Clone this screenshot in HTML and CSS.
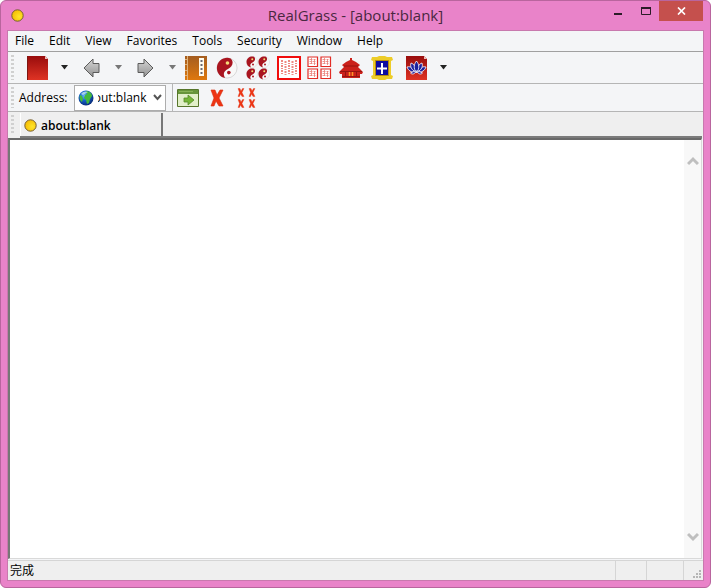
FILE: index.html
```html
<!DOCTYPE html>
<html lang="en">
<head>
  <meta charset="UTF-8">
  <title>RealGrass - [about:blank]</title>
  <link rel="stylesheet" href="styles.css">
</head>
<body>

  <!-- Shared shapes -->
  <svg class="defs" width="0" height="0" aria-hidden="true">
    <defs>
      <linearGradient id="red" x1="0" y1="0" x2="0" y2="1"><stop offset="0" stop-color="#980c0c"/><stop offset="1" stop-color="#df3324"/></linearGradient>
      <linearGradient id="gray" x1="0" y1="0" x2="0" y2="1"><stop offset="0" stop-color="#d5d5d5"/><stop offset="1" stop-color="#929292"/></linearGradient>
      <linearGradient id="wood" x1="0" y1="0" x2="0" y2="1"><stop offset="0" stop-color="#a45d20"/><stop offset="1" stop-color="#df780d"/></linearGradient>
      <radialGradient id="gold" cx=".65" cy=".6" r=".7"><stop offset="0" stop-color="#ffe52a"/><stop offset="1" stop-color="#f5b900"/></radialGradient>
      <radialGradient id="sea" cx=".4" cy=".35" r=".7"><stop offset="0" stop-color="#69b9f5"/><stop offset=".45" stop-color="#1762cd"/><stop offset="1" stop-color="#07256f"/></radialGradient>
      <symbol id="coin" viewBox="0 0 13 13"><circle cx="6.5" cy="6.5" r="5.7" fill="url(#gold)" stroke="#755f36" stroke-width="1"/></symbol>
      <symbol id="caret" viewBox="0 0 9 5"><path d="M1 0h7L4.500 4.500z" fill="currentColor"/></symbol>
      <symbol id="arrow" viewBox="0 0 17 20"><path d="M1 5.500h6V1l9 9-9 9v-4.500H1z" fill="url(#gray)" stroke="#5b5b5b"/></symbol>
      <symbol id="yinyang" viewBox="0 0 24 24">
        <circle cx="12" cy="12" r="11" fill="#f8f8f8" stroke="#d4d4d4"/>
        <path d="M16 1.500C10-1 1 3 1 12c0 6 4 10 9 11-3-5-1-8 3-10 5-2 7-8 3-11.500z" fill="#a91520"/>
        <circle cx="12.500" cy="6.500" r="2" fill="#f5dc79"/><circle cx="14" cy="17" r="2" fill="#a91520"/>
      </symbol>
      <symbol id="cross" viewBox="0 0 14 18"><path d="M1 1h4l2 5 3-5h3L9 9l4 8H9l-3-5-2 5H1l3-8z" fill="#ee3514" stroke="#d92a0b" stroke-width=".6"/></symbol>
      <symbol id="seal" viewBox="0 0 12 12"><path d="M1 1h9.500v9.500H1z" fill="#fff" stroke="#e22c26" stroke-width="1.200"/><path d="M2.500 3.500h3m1 0h2m-6 2h2m1 0h3m-6 2h3m1 0h2M4.500 2v6M7.500 3v6" stroke="#ea7f78" stroke-width=".8"/></symbol>
    </defs>
  </svg>

  <div class="window">
    <header class="titlebar">
      <svg class="app-icon" width="13" height="13"><use href="#coin"/></svg>
      <h1>RealGrass - [about:blank]</h1>
      <div class="window-buttons">
        <button class="win-btn" aria-label="Minimize"><svg width="9" height="10"><path d="M0 7h8v2H0z" fill="#2b1c27"/></svg></button>
        <button class="win-btn" aria-label="Maximize"><svg width="10" height="9"><path d="M.5 1.500h9v6h-9z" fill="none" stroke="#2b1c27"/><path d="M0 0h10v2H0z" fill="#2b1c27"/></svg></button>
        <button class="win-btn close" aria-label="Close"><svg width="9" height="8"><path d="M1 .5l7 7m0-7l-7 7" stroke="#fff" stroke-width="1.700"/></svg></button>
      </div>
    </header>

    <div class="client">
      <nav class="menubar">
        <button>File</button>
        <button>Edit</button>
        <button>View</button>
        <button>Favorites</button>
        <button>Tools</button>
        <button>Security</button>
        <button>Window</button>
        <button>Help</button>
      </nav>

      <div class="toolbar">
        <span class="grip"></span>
        <div class="group">
          <button class="tool" aria-label="New page"><svg width="21" height="24"><path d="M0 0h18l3 3v21H0z" fill="url(#red)"/><path d="M.5 0v24" stroke="#7e1712"/><path d="M18 0v3h3" fill="#efc1bb"/></svg></button>
          <button class="drop" aria-label="New page options"><svg width="9" height="5"><use href="#caret"/></svg></button>
          <button class="tool" aria-label="Back"><svg class="flip" width="17" height="20"><use href="#arrow"/></svg></button>
          <button class="drop off" aria-label="Back history"><svg width="9" height="5"><use href="#caret"/></svg></button>
          <button class="tool" aria-label="Forward"><svg width="17" height="20"><use href="#arrow"/></svg></button>
          <button class="drop off" aria-label="Forward history"><svg width="9" height="5"><use href="#caret"/></svg></button>
        </div>
        <div class="group pages">
          <button class="tool" aria-label="Journal">
            <svg width="22" height="24"><path d="M0 0h22v24H0z" fill="url(#wood)"/><path d="M2.500 0v24" stroke="#e0b27c"/><path d="M0 3.500h3m-3 5h3m-3 6h3m-3 5h3" stroke="#e0b27c"/><path d="M14 2h5v18h-5z" fill="#fffbee"/><path d="M16.500 4v14" stroke="#6a6974" stroke-width="2" stroke-dasharray="2 2"/></svg>
          </button>
          <button class="tool" aria-label="Refresh"><svg width="22" height="22"><use href="#yinyang"/></svg></button>
          <button class="tool" aria-label="Refresh all">
            <svg width="24" height="24"><use href="#yinyang" width="12" height="12"/><use href="#yinyang" x="12" width="12" height="12"/><use href="#yinyang" y="12" width="12" height="12"/><use href="#yinyang" x="12" y="12" width="12" height="12"/></svg>
          </button>
          <button class="tool" aria-label="Seal">
            <svg width="24" height="24"><path d="M1 1h22v22H1z" fill="#fff" stroke="#f00c0c" stroke-width="2"/><path d="M5 4v15M8.500 5v14M12 4v14M15.500 5v14M19 4v14" stroke="#ee8a82" stroke-width="2" stroke-dasharray="2 1 1 1"/></svg>
          </button>
          <button class="tool" aria-label="Tile windows">
            <svg width="25" height="24"><use href="#seal" width="12" height="12"/><use href="#seal" x="13" width="12" height="12"/><use href="#seal" y="12" width="12" height="12"/><use href="#seal" x="13" y="12" width="12" height="12"/></svg>
          </button>
          <button class="tool" aria-label="Home">
            <svg width="24" height="20"><path d="M11 0h2v2l4 2 4 3-2 2 2 2 3 3-1 2h-2v4H3v-4H1l-1-2 3-3 2-2-2-2 4-3 4-2z" fill="#cb211b"/><path d="M5 8h14M1 13.500h22M3 18.500h18" stroke="#961410"/><path d="M10.500 14v4m3-4v4" stroke="#ff9625" stroke-width="1.500"/><path d="M6.500 14v4m11-4v4" stroke="#961410"/></svg>
          </button>
          <button class="tool" aria-label="Full screen">
            <svg width="22" height="24"><path d="M1 1h5l2-1h6l2 1h5l1 3-2 1v14l2 1-1 3h-5l-2 1H8l-2-1H1l-1-3 2-1V5L0 4z" fill="#edcc28"/><path d="M4.500 4.500h13v15h-13z" fill="#0d0ba2" stroke="#b58c12"/><path d="M11 7v11M6 12.500h10" stroke="#fff" stroke-width="2"/></svg>
          </button>
        </div>
        <div class="group">
          <button class="tool" aria-label="Lotus">
            <svg width="21" height="24"><path d="M0 0h18l3 3v21H0z" fill="url(#red)"/><path d="M18 0v3h3" fill="#efc1bb"/><g fill="#1c209d" stroke="#fff" stroke-width=".8"><path d="M10 16C5 17 2 14 1 11c4-1 7 1 9 5zM11 16c5 1 8-2 9-5-4-1-7 1-9 5z"/><path d="M10 16C5 14 4 10 5 7c3 1 5 4 5.500 9zM11 16c5-2 6-6 5-9-3 1-5 4-5.500 9z"/><path d="M10.500 17C7 12 8 8 10.500 5c2.500 3 3.500 7 0 12z"/><path d="M10.500 15c-2 3-4 4-6 2 2-1 4-2 6-2zm0 0c2 3 4 4 6 2-2-1-4-2-6-2z"/></g></svg>
          </button>
          <button class="drop" aria-label="Lotus options"><svg width="9" height="5"><use href="#caret"/></svg></button>
        </div>
      </div>

      <div class="toolbar address-bar">
        <span class="grip"></span>
        <label for="address">Address:</label>
        <div class="combo">
          <svg width="16" height="16"><circle cx="8" cy="8" r="7.500" fill="url(#sea)"/><path d="M8 1c4 0 6 3 6 5l-2 3-1 4-2 1-1-4-2-2 1-3 2-1zM2 5l2 1 1 3-1 3C2 11 1 8 2 5z" fill="#43b93b"/><path d="M3 4c2-3 5-3 7-2L5 5z" fill="#d6f2ef" opacity=".7"/></svg>
          <input type="text" id="address" value="about:blank">
          <button aria-label="Show addresses"><svg width="9" height="7"><path d="M1 1l3.500 4L8 1" fill="none" stroke="#555" stroke-width="2"/></svg></button>
        </div>
        <span class="divider"></span>
        <div class="group actions">
          <button class="tool" aria-label="Go">
            <svg width="22" height="18"><path d="M.5.500h21v17H.5z" fill="#e1efc8" stroke="#56752a"/><path d="M1 1h20v4H1z" fill="#67953a"/><path d="M2 2.500h14" stroke="#87b254"/><path d="M7 9h4V6l6 5-6 5v-3H7z" fill="#76b637" stroke="#558b27" stroke-width=".8"/></svg>
          </button>
          <button class="tool" aria-label="Stop"><svg width="14" height="18"><use href="#cross"/></svg></button>
          <button class="tool" aria-label="Stop all">
            <svg width="19" height="20"><use href="#cross" width="8" height="9"/><use href="#cross" x="11" width="8" height="9"/><use href="#cross" y="11" width="8" height="9"/><use href="#cross" x="11" y="11" width="8" height="9"/></svg>
          </button>
        </div>
      </div>

      <div class="tabbar">
        <span class="grip"></span>
        <div class="tabs">
          <button class="tab"><svg width="13" height="13"><use href="#coin"/></svg>about:blank</button>
        </div>
      </div>

      <main class="page">
        <div class="scrollbar">
          <button aria-label="Scroll up"><svg width="12" height="10"><path d="M1 8l5-5 5 5" fill="none" stroke="#bfbfbf" stroke-width="3"/></svg></button>
          <button aria-label="Scroll down"><svg width="12" height="10"><path d="M1 2l5 5 5-5" fill="none" stroke="#bfbfbf" stroke-width="3"/></svg></button>
        </div>
      </main>

      <footer class="statusbar">
        <span class="status-text" lang="zh">完成</span>
        <span class="pane"></span>
        <span class="pane wide"></span>
        <span class="pane">
          <svg width="8" height="8"><path d="M6 0h2v2H6zM3 3h2v2H3zM6 3h2v2H6zM0 6h2v2H0zM3 6h2v2H3zM6 6h2v2H6z" fill="#b5b5b5"/></svg>
        </span>
      </footer>
    </div>
  </div>

</body>
</html>
```
FILE: styles.css
```css
* {
  box-sizing: border-box;
}

body {
  margin: 0;
  background: #fff;
  font-family: "Open Sans", "Noto Sans CJK SC", sans-serif;
  font-size: 12px;
  color: #000;
}

button {
  padding: 0;
  border: none;
  background: none;
  font: inherit;
  color: inherit;
}

svg {
  display: block;
}

.defs {
  position: absolute;
}

.window {
  display: flex;
  flex-direction: column;
  height: 100vh;
  padding: 0 7px 7px;
  background: #e983c9;
  border: 1px solid #b9659e;
  border-radius: 6px;
}

/* Title bar */
.titlebar {
  display: grid;
  grid-template-columns: 1fr auto 1fr;
  height: 30px;
  flex: none;
}

.app-icon {
  margin: 8px 3px;
}

.titlebar h1 {
  margin: 0;
  font-size: 15px;
  font-weight: normal;
  line-height: 29px;
  color: #4a2840;
}

.window-buttons {
  display: flex;
  justify-content: flex-end;
}

.win-btn {
  display: flex;
  align-items: center;
  justify-content: center;
  width: 27px;
  height: 20px;
}

.win-btn.close {
  width: 44px;
  background: #c5504d;
}

.client {
  display: flex;
  flex-direction: column;
  flex: 1;
  min-height: 0;
  background: #f4f5f7;
  outline: 1px solid #c879ae;
}

/* Menu */
.menubar {
  display: flex;
  gap: 15px;
  height: 21px;
  padding: 0 7px;
  border-bottom: 1px solid #a0a0a0;
  line-height: 20px;
}

/* Toolbars */
.toolbar {
  display: flex;
  align-items: center;
  height: 32px;
  padding-left: 3px;
  border-bottom: 1px solid #b5b5b5;
}

.grip {
  flex: none;
  align-self: stretch;
  width: 3px;
  margin: 3px 0;
  background: repeating-linear-gradient(#d0d0d0 0 2px, transparent 2px 4px);
}

.group {
  display: flex;
  align-items: center;
  gap: 8px;
  margin-left: 12px;
}

.group.pages {
  margin-left: 4px;
}

.tool, .drop {
  display: flex;
  align-items: center;
  justify-content: center;
  width: 23px;
  height: 26px;
}

.tool svg {
  flex: none;
}

.drop {
  width: 15px;
  color: #222;
}

.drop.off {
  color: #777;
}

.flip {
  transform: scaleX(-1);
}

.address-bar {
  height: 28px;
}

.address-bar label {
  margin: 0 6px 0 5px;
}

.combo {
  display: flex;
  align-items: center;
  width: 92px;
  height: 26px;
  padding: 0 3px;
  background: #fff;
  border: 1px solid #adadad;
}

.combo svg {
  flex: none;
}

/* keeps the end of a long address in view */
.combo input {
  flex: 1;
  min-width: 0;
  margin: 0 6px 0 4px;
  padding: 0;
  border: none;
  outline: none;
  background: none;
  font: inherit;
  direction: rtl;
}

.divider {
  width: 1px;
  height: 27px;
  margin-left: 6px;
  background: #b5b5b5;
}

.group.actions {
  gap: 6px;
  margin-left: 4px;
}

/* Tabs */
.tabbar {
  display: flex;
  height: 26px;
  padding-left: 3px;
  background: #efefef;
}

.tabs {
  display: flex;
  flex: 1;
  margin: 1px 1px 0 6px;
  border-bottom: 2px solid #7b7b7b;
}

.tab {
  display: flex;
  align-items: center;
  gap: 4px;
  width: 143px;
  padding: 2px 0 0 3px;
  border-left: 1px solid #fff;
  border-right: 2px solid #777;
  font-weight: 600;
}

/* Page area */
.page {
  display: flex;
  justify-content: flex-end;
  flex: 1;
  min-height: 0;
  margin-right: 1px;
  background: #fff;
  border: 1px solid #d9d9d9;
  border-top: 2px solid #696969;
  border-left: 2px solid #777;
}

.scrollbar {
  display: flex;
  flex-direction: column;
  justify-content: space-between;
  width: 17px;
  padding: 16px 0;
  background: #f8f8f8;
}

.scrollbar button {
  display: flex;
  justify-content: center;
}

/* Status bar */
.statusbar {
  display: flex;
  height: 20px;
  margin-top: 1px;
  background: #efefef;
  border-top: 1px solid #d5d5d5;
  line-height: 20px;
}

.status-text {
  flex: 1;
  padding-left: 2px;
}

.pane {
  display: flex;
  align-items: flex-end;
  justify-content: flex-end;
  width: 31px;
  border-left: 1px solid #d5d5d5;
}

.pane.wide {
  width: 37px;
}

.pane:last-child {
  width: 20px;
  padding: 2px;
}
```
